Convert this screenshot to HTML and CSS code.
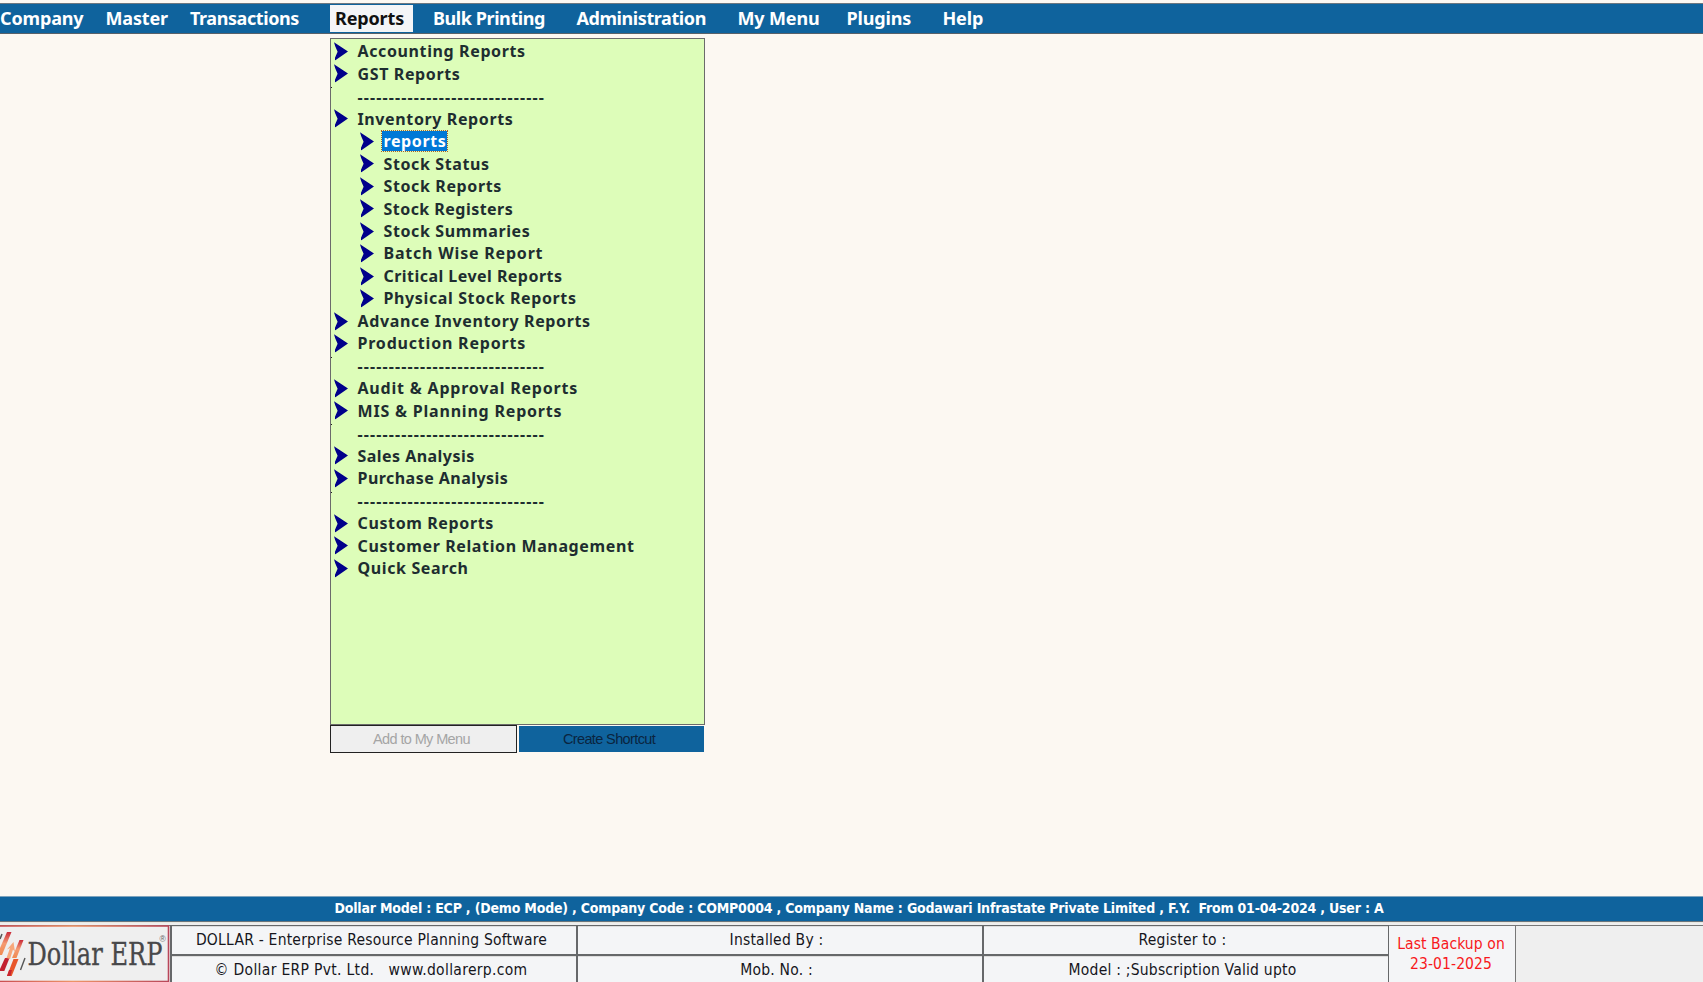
FILE: index.html
```html
<!DOCTYPE html>
<html lang="en">
<head>
<meta charset="utf-8">
<title>Dollar ERP</title>
<link rel="stylesheet" href="styles.css">
</head>
<body>
<svg class="defs" width="0" height="0"><defs><symbol id="arrow" viewBox="0 0 14 18"><path d="M0 0L14 9.2L1 18.3V15.5L3.6 9.5L1.2 4z" fill="#00008b"/></symbol></defs></svg>
<nav class="menubar">
<a>Company</a><a>Master</a><a class="lig">Transactions</a><a class="active">Reports</a><a class="lig">Bulk Printing</a><a class="lig">Administration</a><a>My Menu</a><a>Plugins</a><a>Help</a>
</nav>
<main class="workspace">
<section class="panel">
<ul class="tree">
<li><svg><use href="#arrow"/></svg><span>Accounting Reports</span></li>
<li><svg><use href="#arrow"/></svg><span>GST Reports</span></li>
<li class="sep"><span>------------------------------</span></li>
<li><svg><use href="#arrow"/></svg><span>Inventory Reports</span></li>
<li class="sub"><svg><use href="#arrow"/></svg><span class="selected">reports</span></li>
<li class="sub"><svg><use href="#arrow"/></svg><span>Stock Status</span></li>
<li class="sub"><svg><use href="#arrow"/></svg><span>Stock Reports</span></li>
<li class="sub tight"><svg><use href="#arrow"/></svg><span>Stock Registers</span></li>
<li class="sub"><svg><use href="#arrow"/></svg><span>Stock Summaries</span></li>
<li class="sub loose"><svg><use href="#arrow"/></svg><span>Batch Wise Report</span></li>
<li class="sub tight"><svg><use href="#arrow"/></svg><span>Critical Level Reports</span></li>
<li class="sub"><svg><use href="#arrow"/></svg><span>Physical Stock Reports</span></li>
<li><svg><use href="#arrow"/></svg><span>Advance Inventory Reports</span></li>
<li class="loose"><svg><use href="#arrow"/></svg><span>Production Reports</span></li>
<li class="sep"><span>------------------------------</span></li>
<li class="loose"><svg><use href="#arrow"/></svg><span>Audit &amp; Approval Reports</span></li>
<li class="loose"><svg><use href="#arrow"/></svg><span>MIS &amp; Planning Reports</span></li>
<li class="sep"><span>------------------------------</span></li>
<li class="tight"><svg><use href="#arrow"/></svg><span>Sales Analysis</span></li>
<li class="tight"><svg><use href="#arrow"/></svg><span>Purchase Analysis</span></li>
<li class="sep"><span>------------------------------</span></li>
<li><svg><use href="#arrow"/></svg><span>Custom Reports</span></li>
<li><svg><use href="#arrow"/></svg><span>Customer Relation Management</span></li>
<li><svg><use href="#arrow"/></svg><span>Quick Search</span></li>
</ul>
<div class="buttons"><button class="add" disabled>Add to My Menu</button><button class="create">Create Shortcut</button></div>
</section>
</main>
<div class="status"><span>Dollar Model : ECP , (Demo Mode) , Company Code : COMP0004 , Company Name : Godawari Infrastate Private Limited , F.Y.&nbsp; From 01-04-2024 , User : A</span></div>
<footer class="info">
<div class="logo">
<svg width="170" height="58" viewBox="0 0 170 58">
<defs>
<linearGradient id="frame" x1="0" x2="1" y1="0" y2="0"><stop offset="0" stop-color="#c84a50"/><stop offset=".45" stop-color="#ee9468"/><stop offset="1" stop-color="#b9475a"/></linearGradient>
<linearGradient id="stripe" x1="0" x2="0" y1="0" y2="1"><stop offset="0" stop-color="#c92a3a"/><stop offset=".5" stop-color="#f49a72"/><stop offset="1" stop-color="#f08a50"/></linearGradient>
</defs>
<rect x="-5" y="1" width="173.500" height="55.500" fill="none" stroke="url(#frame)" stroke-width="1.600"/>
<path d="M0 14L2 9" stroke="#555" stroke-width="1.500"/>
<path d="M7 7H11.500L2 30L0 30V23z" fill="url(#stripe)"/>
<path d="M5 33H9.500L4.300 46H0V44z" fill="#c2202f"/>
<path d="M6.500 33L10 23L7 24.500L13.500 17L15 27L13 24.500L10 34z" fill="#f7a77b"/>
<path d="M19.500 15H23.500L16.500 33H12z" fill="url(#stripe)"/>
<path d="M13.500 34H18.500L11.700 51H7z" fill="#e8562a"/>
<path d="M9 45H12L10.500 51H7z" fill="#c9252f"/>
<path d="M25 33L20.500 45" stroke="#555" stroke-width="1.400"/>
<text x="27.500" y="40.300" textLength="135" lengthAdjust="spacingAndGlyphs">Dollar ERP</text>
<text class="reg" x="159.500" y="17">®</text>
</svg>
</div>
<div class="cells">
<div class="product">DOLLAR - Enterprise Resource Planning Software</div><div class="mid">Installed By :</div><div class="mid">Register to :</div>
<div class="copy">© Dollar ERP Pvt. Ltd.&nbsp;&nbsp; www.dollarerp.com</div><div class="mid">Mob. No. :</div><div class="mid">Model : ;Subscription Valid upto</div>
</div>
<div class="backup">Last Backup on<br>23-01-2025</div>
<div class="rest"></div>
</footer>
</body>
</html>
```
FILE: styles.css
```css
* { box-sizing: border-box; }
body {
  margin: 0; height: 982px; overflow: hidden; display: flex; flex-direction: column;
  background: #fcf8f2; font-family: "Noto Sans", sans-serif; padding-top: 3px;
}
.defs { display: block; position: absolute; }
.menubar {
  height: 31px; flex: none; display: grid;
  grid-template-columns: 105.500px 84.500px 140px 83px 143.500px 161px 109px 96px 1fr;
  background: #0f639d;
  border-top: 1px solid #6c7780; border-bottom: 1px solid #59626a;
  color: #fff; font-weight: 700; font-size: 18px; line-height: 29px; white-space: nowrap;
}
.menubar a { letter-spacing: -.150px; }
.menubar a.lig { letter-spacing: -.420px; }
.menubar a.active {
  background: #f4f5f7; color: #111; margin: 1px 0; line-height: 27px; padding-left: 5px;
}
.menubar a.active ~ a { padding-left: 20px; margin-right: -20px; }
.workspace { flex: 1; padding: 4px 0 0 330px; min-height: 0; }
.panel { width: 375px; }
.tree {
  list-style: none; margin: 0; height: 687px; padding: 1.500px 0 0 2.500px;
  background: #ddfdb9; border: 1px solid #6b6b6b;
  color: #1e2d30; font-weight: 700; font-size: 16px; letter-spacing: .620px;
}
.tree li { height: 22.480px; display: flex; align-items: center; line-height: 21px; }
.tree svg { width: 14px; height: 18.500px; margin: -1px 9.500px 0 .5px; flex: none; overflow: visible; }
.tree .sub { padding-left: 26px; }
.tree .sep {
  letter-spacing: 1.130px; line-height: 20px;
  background: linear-gradient(#222, #222) -1px 2px / 2px 1px no-repeat; margin-left: -2.500px; padding-left: 26.500px;
}
.tree .loose { letter-spacing: .800px; }
.tree .tight { letter-spacing: .460px; }
.tree .selected {
  background: #0078d7; color: #fff; outline: 1px dotted #a8602a; padding: 0 1px 0 2px; margin: -2px 0 0 -2px;
  height: 20px; line-height: 21px;
}
.buttons { display: flex; height: 28px; gap: 2px; }
.buttons button {
  font: 14.500px "Liberation Sans", sans-serif; letter-spacing: -.620px; padding: 0 4px 1px 0; border: 0;
}
.buttons .add { width: 187px; background: #efefef; color: #a5a5a5; border: 1px solid #222; }
.buttons .create { width: 185px; margin: 1px 0; background: #0f639d; color: #0a2540; padding-right: 5px; }
.status {
  height: 26px; flex: none; background: #0f639d; border-top: 1px solid #7da3bd; border-bottom: 1px solid #69747c;
  color: #fff; font: 700 14px/23px "DejaVu Sans Condensed", sans-serif; letter-spacing: -.2px;
  text-align: center; padding-left: 15px; white-space: nowrap;
}
.info {
  height: 60px; flex: none; padding-top: 2px; display: flex;
  font: 15.500px "DejaVu Sans Condensed", sans-serif; letter-spacing: .1px; color: #16161c; background: #efefef;
  border-top: 1px solid #e8e8e0;
}
.logo { width: 170px; background: #efefef; border-top: 1px solid #777; }
.logo svg { display: block; margin-top: -1px; overflow: visible; }
.logo text { font: 31px "DejaVu Serif", serif; letter-spacing: 0; fill: #48484a; stroke: #48484a; stroke-width: .3px; }
.logo .reg { font: 8.500px "Liberation Sans", sans-serif; fill: #666; stroke: none; }
.cells {
  width: 1219px; display: grid; grid-template-columns: 404px 404px 404px; grid-template-rows: 27.500px 27px;
  gap: 2px; padding: 1px 2px 1px 2px; background: #66686a;
}
.cells div { background: #f4f5f7; display: flex; align-items: center; justify-content: center; white-space: pre; border-top: 1px solid #ddd; }
.cells .product { letter-spacing: .220px; padding-right: 5px; }
.cells .mid { padding-right: 7px; letter-spacing: .220px; }
.cells .copy { letter-spacing: .310px; padding-right: 6px; }
.backup {
  width: 127px; background: #f4f5f7; border-top: 1px solid #777; border-right: 1px solid #777;
  color: #f81820; text-align: center; line-height: 20px; padding: 8px 2px 0 0;
}
.rest { flex: 1; border-top: 1px solid #777; }
```
